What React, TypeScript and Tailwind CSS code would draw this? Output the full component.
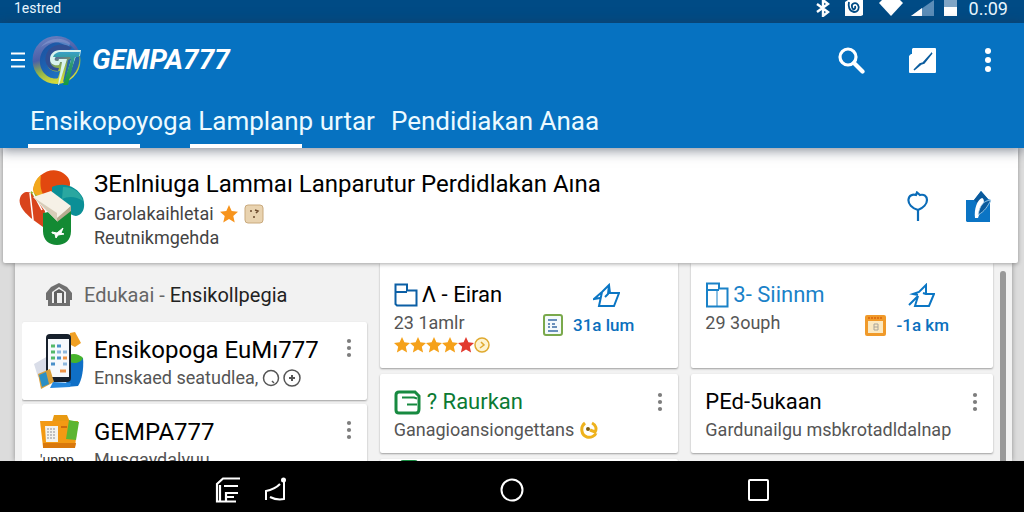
import type { ReactNode } from 'react';

type StarProps = { color: string; size?: string };

function Star({ color, size = 'size-4' }: StarProps) {
  return (
    <svg viewBox="0 0 16 16" className={size} fill={color}>
      <path d="M8 0l2.400 5.300 5.600.6-4.200 3.800 1.300 5.800L8 12.500 2.900 15.500l1.300-5.800L0 5.900l5.600-.6z" />
    </svg>
  );
}

function MoreButton({ label }: { label: string }) {
  return (
    <button aria-label={label} className="flex h-5 w-4 shrink-0 items-center justify-center">
      <svg viewBox="0 0 6 20" className="h-5 w-1.5" fill="#7d7d7d">
        <circle cx="3" cy="3" r="2.100" />
        <circle cx="3" cy="10" r="2.100" />
        <circle cx="3" cy="17" r="2.100" />
      </svg>
    </button>
  );
}

function Logo() {
  return (
    <svg viewBox="0 0 50 50" className="size-[50px] shrink-0">
      <defs>
        <linearGradient id="ball" x1="0" y1="0" x2="0.3" y2="1">
          <stop offset="0" stopColor="#6f86c4" />
          <stop offset="0.5" stopColor="#4b5fa8" />
          <stop offset="0.75" stopColor="#8fb34a" />
          <stop offset="1" stopColor="#d3d93c" />
        </linearGradient>
        <linearGradient id="swirl" x1="0" y1="0" x2="1" y2="1">
          <stop offset="0" stopColor="#1c4e9c" />
          <stop offset="1" stopColor="#1f7fd0" />
        </linearGradient>
        <linearGradient id="seven" x1="0" y1="0" x2="0" y2="1">
          <stop offset="0" stopColor="#3aa0c8" />
          <stop offset="0.4" stopColor="#2f9a6c" />
          <stop offset="1" stopColor="#159a3f" />
        </linearGradient>
      </defs>
      <circle cx="24.500" cy="25" r="24" fill="url(#ball)" />
      <path d="M47 20c2 12-5 23-16 27l5-22z" fill="#2668a8" />
      <path d="M43 15C37 6 23 4 14 12S6 36 17 42c3 1.500 7 2 9 1l2-7c-8 2-14-3-13-11 1-7 8-12 16-9l3 1z" fill="url(#swirl)" />
      <path d="M38 8C29 1 16 3 9 12 17 6 28 5 37 13z" fill="#8fa3d8" opacity="0.5" />
      <path d="M40 13C32 7 21 9 16 16c-6 9-1 20 10 20l1-3c-7 0-11-5-8-11 3-5 9-7 15-5z" fill="#314f94" />
      <path d="M49 15H28c-6 0-10 4-10 9 0 5 4 7 9 6l1.500-4H25c-2 0-3-1-2-3 1-1.500 2-2 5-2h12L32 50h-5l8-26h-8l-1 3h4L26 50h8l10-29h4z" fill="#d9f3ee" />
      <path d="M48 17H29c-4 0-7 2-8 5h17l1 3-8 25h5L43 22h4z" fill="url(#seven)" />
    </svg>
  );
}

function BookBadge() {
  return (
    <svg viewBox="0 0 66 78" className="h-[78px] w-[66px] shrink-0">
      <path d="M14 22C17 5 33-2 44 5c8 5 9 13 4 17L32 30z" fill="#e2480f" />
      <path d="M14 22c1-8 4-12 8-15-1 8-1 14 3 21l-9 2z" fill="#f2a81d" />
      <path d="M12 23l12 9-4 5-9-7z" fill="#8cba2c" />
      <path d="M1 30c2-6 7-7 11-5l14 18-2 16C12 51-2 40 1 30z" fill="#d9441c" />
      <path d="M11 25l3 27M14 25l9 17" stroke="#fff" strokeWidth="1.500" />
      <path d="M33 19c12-6 26 0 31 11 3 9 0 17-7 18-6 0-12-9-24-20z" fill="#0b8f96" />
      <path d="M44 19c11 0 18 6 20 14-7-5-15-5-21-2z" fill="#2aa7a0" />
      <path d="M24 45l28-5v23c0 9-6 14-14 14s-14-5-14-14z" fill="#138a33" />
      <path d="M14 29l18-6 20 15-14 15z" fill="#f6f1e6" />
      <path d="M14 29l24 16v8z" fill="#d8cdb9" />
      <path d="M52 38v5L38 54v-4z" fill="#b9ab90" />
      <path d="M33 64l5 1 6-5-2 5 3 1-6 1-2 3-1-4-3-1z" fill="#fff" stroke="#fff" />
    </svg>
  );
}

function PhoneArt() {
  return (
    <svg viewBox="0 0 50 58" className="h-[58px] w-[50px]">
      <path d="M0 32l14-8 4 18-14 3z" fill="#d9dde8" />
      <path d="M34 22l15 4c1 10-1 22-5 28l-12 1z" fill="#0f6fc6" />
      <path d="M35 23c5-2 10-1 14 3-2 5-9 6-13 4z" fill="#46b42c" />
      <path d="M36 1l5-1 6 11-6 4-6-3z" fill="#f0a024" />
      <rect x="12" y="2" width="25" height="48" rx="4" fill="#17202c" />
      <rect x="14" y="7" width="21" height="38" fill="#f7f9fc" />
      <path d="M17 14h4M17 20h4M17 26h4" stroke="#55b96a" strokeWidth="3" />
      <path d="M23 14h4M23 26h4M17 32h4" stroke="#4a90c9" strokeWidth="3" />
      <path d="M29 20h4M29 32h4M23 20h4" stroke="#8fb8dd" strokeWidth="3" />
      <path d="M29 26h4M26 39h6" stroke="#ef9548" strokeWidth="3" />
      <path d="M4 42l12-5 4 13-13 7z" fill="#d99f3a" />
      <path d="M5 43l7-3 3 12-7 3z" fill="#2b8fc4" />
      <path d="M19 50l18 1-1 4-20 1z" fill="#2487dd" />
    </svg>
  );
}

function CaseArt() {
  return (
    <svg viewBox="0 0 40 34" className="h-[34px] w-10">
      <path d="M12 8l2-7h13l3 7z" fill="#e99a12" />
      <path d="M0 7h38l-3 26H3z" fill="#f39a13" />
      <path d="M3 29h33l-1 5H3z" fill="#d9780b" />
      <path d="M29 6l10 2-3 18-10-1z" fill="#5cb531" />
      <path d="M5 12h13v16H6z" fill="#f3f3ee" />
      <path d="M7 15h9M7 18h9M7 21h9M7 24h9" stroke="#8d8f96" strokeWidth="1.200" strokeDasharray="2 1" />
      <path d="M21 13h6" stroke="#c25c0d" strokeWidth="1.500" />
    </svg>
  );
}

type PlaceProps = {
  icon: ReactNode;
  title: ReactNode;
  detail: string;
  thumb: ReactNode;
  badge: ReactNode;
  distance: string;
  children?: ReactNode;
};

function PlaceCard({ icon, title, detail, thumb, badge, distance, children }: PlaceProps) {
  return (
    <article className="flex h-[105px] justify-between rounded-b-xs bg-white pt-4 pr-11 pl-3.5 shadow-[0_1px_2px_rgba(0,0,0,0.35)]">
      <div>
        <h3 className="flex h-8 items-center gap-1 text-[22px] leading-8 text-black">
          {icon}
          {title}
        </h3>
        <p className="text-[18px] leading-6 text-[#555]">{detail}</p>
        {children}
      </div>
      <div>
        <button aria-label="Suka" className="ml-auto flex h-8 items-center pr-3.5">
          {thumb}
        </button>
        <p className="flex items-center gap-2.5 text-[17px] leading-7 font-medium text-[#0b70bd]">
          {badge}
          {distance}
        </p>
      </div>
    </article>
  );
}

type TopicProps = { icon?: ReactNode; title: string; text: string; extra?: ReactNode; green?: boolean };

function TopicCard({ icon, title, text, extra, green }: TopicProps) {
  return (
    <article className="flex h-[79px] justify-between rounded-xs bg-white px-2.5 pt-3 pl-3.5 shadow-[0_1px_2px_rgba(0,0,0,0.35)]">
      <div>
        <h3 className={`flex h-8 items-center gap-1.5 text-[22px] leading-8 ${green ? 'text-[#0b7a33]' : 'text-black'}`}>
          {icon}
          {title}
        </h3>
        <p className="flex items-center gap-1.5 text-[18px] leading-6 whitespace-nowrap text-[#555]">
          {text}
          {extra}
        </p>
      </div>
      <div className="-ml-4 pt-1.5">
        <MoreButton label={`Opsi ${title}`} />
      </div>
    </article>
  );
}

function StatusBar() {
  return (
    <div className="flex h-[23px] shrink-0 items-start justify-between bg-[#004b85] pr-4 pl-3.5 text-[#e8f6ff]">
      <span className="text-[14px] leading-4">1estred</span>
      <div className="flex items-start">
        <svg viewBox="0 0 16 17" className="mr-3.5 h-[17px] w-4" fill="none" stroke="#fff" strokeWidth="2.400">
          <path d="M2 4l11 8-5 4V0l5 4-11 8" />
        </svg>
        <svg viewBox="0 0 18 17" className="mr-4 h-[17px] w-[18px]">
          <path d="M0 2l3-2h15v15l-2 1H0z" fill="#fff" />
          <path d="M4 2c-1 4 0 9 5 10 4 0 6-4 4-7S6 3 7 7s4 2 3-1" fill="none" stroke="#004b85" strokeWidth="1.800" />
        </svg>
        <svg viewBox="0 0 24 16" className="mr-2 h-4 w-6" fill="#fff">
          <path d="M3 0h18l3 3-12 13L0 3z" />
        </svg>
        <svg viewBox="0 0 23 16" className="mr-2.5 h-4 w-[23px]">
          <path d="M23 0v16H0z" fill="#5b8db8" />
          <path d="M11 8v8H0z" fill="#fff" />
        </svg>
        <svg viewBox="0 0 13 16" className="mr-3 h-4 w-[13px]">
          <path d="M0 0h13v8H0z" fill="#7fa5c6" />
          <path d="M0 7h13v9H0z" fill="#fff" />
        </svg>
        <span className="text-[18px] leading-[18px]">0.:09</span>
      </div>
    </div>
  );
}

function AppBar() {
  return (
    <header className="relative z-10 shrink-0 bg-[#0672c1] text-white shadow-[0_2px_12px_rgba(40,50,70,0.6)]">
      <div className="flex h-[74px] items-center pr-8 pl-2.5">
        <button aria-label="Menu">
          <svg viewBox="0 0 16 16" className="size-4" stroke="#fff" strokeWidth="2">
            <path d="M1 1.500h14M1 8h14M1 14.500h14" />
          </svg>
        </button>
        <div className="ml-1.5 flex flex-1 items-center gap-2.5">
          <Logo />
          <h1 className="text-[28px] leading-8 font-bold italic">GEMPA777</h1>
        </div>
        <div className="flex items-center">
          <button aria-label="Cari" className="mr-11">
            <svg viewBox="0 0 27 27" className="size-[27px]" fill="none" stroke="#fff">
              <circle cx="10" cy="10" r="8" strokeWidth="3.200" />
              <path d="M16 16l8.500 8.500" strokeWidth="4.200" strokeLinecap="round" />
            </svg>
          </button>
          <button aria-label="Tulis" className="mr-12">
            <svg viewBox="0 0 27 27" className="size-[27px]">
              <path d="M4 1h22a1 1 0 011 1v23a1 1 0 01-1 1H1a1 1 0 01-1-1V9l2-2h1V2z" fill="#fff" />
              <path d="M5 23l6-6 3-1 9-10-8 10-3 1-1 1-6 5z" fill="#0a5c9e" stroke="#0a5c9e" strokeWidth="1.500" />
            </svg>
          </button>
          <button aria-label="Lainnya">
            <svg viewBox="0 0 8 26" className="h-[26px] w-2" fill="#fff">
              <circle cx="4" cy="4" r="3" />
              <circle cx="4" cy="13" r="3" />
              <circle cx="4" cy="22" r="3" />
            </svg>
          </button>
        </div>
      </div>
      <nav className="flex gap-4 pt-2 pl-[30px] text-[26px] leading-8 whitespace-nowrap text-[#ecfaff]">
        <a href="#lamplang">Ensikopoyoga Lamplanp urtar</a>
        <a href="#pendidikan">Pendidiakan Anaa</a>
      </nav>
      <div className="flex gap-[50px] pt-[7px] pl-7">
        <span className="h-1 w-28 bg-white" />
        <span className="h-1 w-28 bg-white" />
      </div>
    </header>
  );
}

export default function App() {
  return (
    <div className="flex h-screen flex-col overflow-hidden bg-[#dcdcdc] font-[Roboto,sans-serif]">
      <StatusBar />
      <AppBar />

      <section className="relative z-5 mr-1.5 ml-[3px] flex shrink-0 items-start rounded-b-xs bg-white pt-[22px] pr-[26px] pb-[13px] pl-4 shadow-[0_1px_4px_rgba(0,0,0,0.35)]">
        <div className="-mt-0.5 -mb-4">
          <BookBadge />
        </div>
        <div className="ml-[9px] flex-1">
          <h2 className="mb-1 text-[24px] leading-7 text-black">ЗEnlniuga Lammaı Lanparutur Perdidlakan Aına</h2>
          <p className="flex items-center gap-1.5 text-[18px] leading-6 text-[#444]">
            Garolakaihletai
            <Star color="#f7941d" size="size-[18px]" />
            <svg viewBox="0 0 20 20" className="size-5">
              <rect x="1" y="1" width="18" height="18" rx="3" fill="#e9d3b0" stroke="#c9a97c" />
              <path d="M6 7h2M11 6l3 1-2 2M10 12v2" stroke="#6b4a2c" strokeWidth="1.500" fill="none" />
            </svg>
          </p>
          <p className="text-[18px] leading-6 text-[#444]">Reutnikmgehda</p>
        </div>
        <div className="flex items-center gap-9 pt-5">
          <button aria-label="Lokasi">
            <svg viewBox="0 0 22 32" className="h-8 w-[22px]" fill="none" stroke="#0b6cb8" strokeWidth="2.200">
              <path d="M11 19C5 17 1 13 1.500 8.500 2 4 6 3 9 4l1-2.500L13 4c4-1 7 1 7 5s-4 8-9 10zM11 19v11" />
            </svg>
          </button>
          <button aria-label="Simpan">
            <svg viewBox="0 0 27 34" className="h-[34px] w-[27px]">
              <path d="M1 10h8l7-9 7 8 3 1-1 3v19H2l-1-1z" fill="#0b74c4" />
              <path d="M16 1l7 8-9 6-5-5z" fill="#0a5a9c" />
              <path d="M10 28c-1-9 2-18 7-20 3 1 2 6 0 10-2 4-3 7-4 10z" fill="#fff" />
              <path d="M26 10c-8 1-11 5-13 15 7-4 9-8 13-15z" fill="#0a5a9c" stroke="#cfe6f7" strokeWidth="0.700" />
            </svg>
          </button>
        </div>
      </section>

      <main className="mr-3 ml-[15px] flex min-h-0 flex-1 bg-[#f2f2f2] pr-1.5 pl-[7px] shadow-[0_0_5px_rgba(0,0,0,0.35)]">
        <div className="grid flex-1 grid-cols-[344fr_298fr_301fr] gap-x-[13px] overflow-hidden pr-[7px]">
          <div className="flex flex-col gap-1">
            <h2 className="flex h-[55px] shrink-0 items-center gap-3 pt-2 pl-6 text-[20px] leading-6 text-[#666]">
              <svg viewBox="0 0 26 24" className="h-6 w-[26px]">
                <path d="M13 0l8 4 5 6v7h-2v6H2v-6H0v-7l5-6z" fill="#707070" />
                <path d="M13 4l7 5v11H6V9z" fill="#efefef" />
                <path d="M8 20V9l5-3 5 3v11h-2V10h-5v10z" fill="#606060" />
              </svg>
              <span>
                Edukaai - <span className="text-[#222]">Ensikollpegia</span>
              </span>
            </h2>
            <article className="flex h-[78px] shrink-0 rounded-xs bg-white pr-2.5 pl-3 shadow-[0_1px_2px_rgba(0,0,0,0.35)]">
              <div className="w-[60px] shrink-0 pt-2.5">
                <PhoneArt />
              </div>
              <div className="flex-1 pt-3">
                <h3 className="text-[24px] leading-8 text-black">Ensikopoga EuMı777</h3>
                <p className="flex items-center gap-1 text-[18px] leading-6 whitespace-nowrap text-[#555]">
                  Ennskaed seatudlea,
                  <svg viewBox="0 0 40 18" className="h-[18px] w-10" fill="none" stroke="#555" strokeWidth="1.500">
                    <circle cx="9" cy="9" r="7.500" />
                    <path d="M10 12l2 2" />
                    <circle cx="30" cy="9" r="8" />
                    <path d="M27 9h6M30 6v6" strokeWidth="2" />
                  </svg>
                </p>
              </div>
              <div className="-ml-4 pt-4">
                <MoreButton label="Opsi Ensikopoga" />
              </div>
            </article>
            <article className="flex h-[78px] shrink-0 rounded-xs bg-white pr-2.5 pl-3 shadow-[0_1px_2px_rgba(0,0,0,0.35)]">
              <div className="w-[60px] shrink-0 pt-2.5 pl-1.5">
                <CaseArt />
                <p className="text-[14px] leading-6 text-[#333]">'uppp</p>
              </div>
              <div className="flex-1 pt-3">
                <h3 className="text-[24px] leading-8 text-black">GEMPA777</h3>
                <p className="text-[18px] leading-6 text-[#555]">Musgaydalyuu</p>
              </div>
              <div className="-ml-4 pt-4">
                <MoreButton label="Opsi GEMPA777" />
              </div>
            </article>
          </div>

          <div className="flex flex-col gap-1.5">
            <PlaceCard
              icon={
                <svg viewBox="0 0 24 24" className="size-6" fill="none" stroke="#0b5fa5" strokeWidth="2">
                  <path d="M1.500 1.500H13v6h9.500v15H3l-1.500-1.500zM1.500 9H13" />
                </svg>
              }
              title="Λ - Eiran"
              detail="23 1amlr"
              thumb={
                <svg viewBox="0 0 27 25" className="h-[25px] w-[27px]" fill="none" stroke="#0b76c4" strokeWidth="2">
                  <path d="M7 15l-6 1 8-7 7-7 1 8 9 0-5 13H6l3-14M16 2l-1 9-3 3" />
                </svg>
              }
              badge={
                <svg viewBox="0 0 20 22" className="h-[22px] w-5">
                  <rect x="1" y="1" width="18" height="20" rx="2" fill="#f4fafc" stroke="#7aa94c" strokeWidth="2" />
                  <path d="M5 6h9M5 10h2M9 10h3M5 13h2M9 13h5M5 17h10" stroke="#3b6ea5" strokeWidth="1.500" />
                </svg>
              }
              distance="31a lum"
            >
              <div className="flex items-center pt-0.5">
                <Star color="#f5a11a" />
                <Star color="#f5a11a" />
                <Star color="#f5a11a" />
                <Star color="#f5a11a" />
                <Star color="#e23a2e" />
                <svg viewBox="0 0 16 16" className="size-4" fill="none" stroke="#dfa92f" strokeWidth="1.500">
                  <circle cx="8" cy="8" r="7" fill="#fdf3cf" />
                  <path d="M7 5l3 3-4 3" />
                </svg>
              </div>
            </PlaceCard>
            <TopicCard
              green
              icon={
                <svg viewBox="0 0 27 25" className="h-[25px] w-[27px]" fill="none" stroke="#178a40">
                  <path d="M5 2h16l4 4v13c0 3-1 4-3 4H5c-2 0-3-1-3-3V5c0-2 1-3 3-3z" strokeWidth="3" />
                  <path d="M8 7.500h12l3 1M13 14.500h10" strokeWidth="2" />
                </svg>
              }
              title="? Raurkan"
              text="Ganagioansiongettans"
              extra={
                <svg viewBox="0 0 18 18" className="size-[18px]" fill="none" stroke="#eeb21d" strokeWidth="3">
                  <path d="M5 2C0 6 1 14 7 16c4 1 8-1 9-4M12 2c4 2 5 6 3 9l-5-2" />
                  <circle cx="8" cy="8" r="1" stroke="#7a5a10" strokeWidth="2" />
                </svg>
              }
            />
            <div className="h-[79px] shrink-0 rounded-xs bg-white pl-5 shadow-[0_1px_2px_rgba(0,0,0,0.35)]">
              <svg viewBox="0 0 18 18" className="size-[18px]">
                <rect y="1" width="18" height="17" rx="3" fill="#178a40" />
              </svg>
            </div>
          </div>

          <div className="flex flex-col gap-1.5">
            <PlaceCard
              icon={
                <svg viewBox="0 0 24 26" className="h-[26px] w-6" fill="none" stroke="#1a82c8" strokeWidth="2">
                  <path d="M2 1.500h12v5h8.500V24.500H2zM2 8h12" />
                  <path d="M12 8v16" strokeWidth="1" />
                </svg>
              }
              title={<span className="text-[#1a82c8]">3- Siinnm</span>}
              detail="29 3ouph"
              thumb={
                <svg viewBox="0 0 27 25" className="h-[25px] w-[27px]" fill="none" stroke="#0b76c4" strokeWidth="2">
                  <path d="M1 22l9-9-3 10h14l5-12-8 0V2l-7 7-6 2 5 1M18 11l-3-1" />
                </svg>
              }
              badge={
                <svg viewBox="0 0 21 21" className="size-[21px]">
                  <rect width="21" height="21" rx="2" fill="#f09a2a" />
                  <path d="M3 6h15v12H3z" fill="#fbe9c2" />
                  <path d="M3 3h15" stroke="#d9660e" strokeWidth="1.500" strokeDasharray="2 1" />
                  <path d="M9 9h4v6H9zM9 12h4" fill="none" stroke="#a8a49c" />
                </svg>
              }
              distance="-1a km"
            />
            <TopicCard title="PEd-5ukaan" text="Gardunailgu msbkrotadldalnap" />
          </div>
        </div>
        <div className="mt-2 w-1.5 rounded-t-full bg-[#999]" />
      </main>

      <footer className="grid h-[51px] shrink-0 grid-cols-[1fr_24px_1fr] items-center bg-black pt-1.5">
        <div className="flex items-center justify-center gap-6">
          <button aria-label="Daftar">
            <svg viewBox="0 0 25 26" className="h-[26px] w-[25px]" fill="none" stroke="#fff" strokeWidth="2.200">
              <path d="M25 1.500H8L2 7v17.500h19M5 8v16M9 9h14M11 24v-8h12M11 20h8" />
            </svg>
          </button>
          <button aria-label="Kembali">
            <svg viewBox="0 0 22 25" className="h-[25px] w-[22px]" fill="none" stroke="#fff" strokeWidth="2">
              <path d="M2 23v-9c6-1 10-3 14-7M6 20c4 2 9 3 14 2V5" />
              <circle cx="19.500" cy="3" r="1.500" fill="#fff" />
            </svg>
          </button>
        </div>
        <button aria-label="Beranda">
          <svg viewBox="0 0 24 24" className="size-6" fill="none" stroke="#fff" strokeWidth="2">
            <circle cx="12" cy="12" r="10.500" />
          </svg>
        </button>
        <div className="flex justify-center pr-8">
          <button aria-label="Terbaru">
            <svg viewBox="0 0 21 22" className="h-[22px] w-[21px]" fill="none" stroke="#fff" strokeWidth="2">
              <rect x="1" y="1" width="19" height="20" rx="1" />
            </svg>
          </button>
        </div>
      </footer>
    </div>
  );
}
